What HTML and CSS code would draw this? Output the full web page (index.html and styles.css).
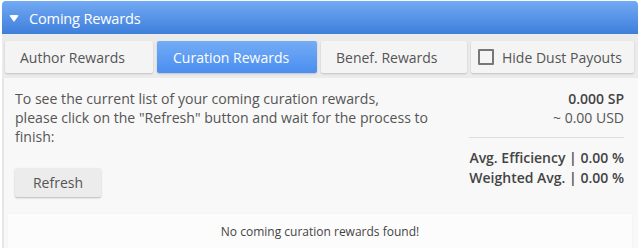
FILE: index.html
```html
<!DOCTYPE html>
<html>
<head>
<meta charset="utf-8">
<link rel="stylesheet" href="styles.css">
</head>
<body>
<div class="panel">
  <div class="panel-header">
    <span class="caret"></span>
    <span class="title">Coming Rewards</span>
  </div>
  <div class="tabs">
    <div class="tab">Author Rewards</div>
    <div class="tab active">Curation Rewards</div>
    <div class="tab">Benef. Rewards</div>
    <div class="tab check"><span class="box"></span>Hide Dust Payouts</div>
  </div>
  <div class="body">
    <div class="info">
      <div class="left">
        <p class="msg">To see the current list of your coming curation rewards,<br>please click on the "Refresh" button and wait for the process to<br>finish:</p>
        <button class="btn">Refresh</button>
      </div>
      <div class="right">
        <div class="sp">0.000 SP</div>
        <div class="usd">~ 0.00 USD</div>
        <div class="sep"></div>
        <div class="stat">Avg. Efficiency | 0.00 %</div>
        <div class="stat">Weighted Avg. | 0.00 %</div>
      </div>
    </div>
    <div class="empty">No coming curation rewards found!</div>
  </div>
</div>
</body>
</html>
```
FILE: styles.css
```css
html, body {
  margin: 0;
  padding: 0;
  background: #ffffff;
  font-family: "Open Sans", "Noto Sans", sans-serif;
  color: #555555;
}
.panel {
  margin: 1px 2px 0 2px;
}
.panel-header {
  height: 33px;
  border-radius: 4px 4px 0 0;
  background: linear-gradient(#72a9f3, #3e7fdb);
  display: flex;
  align-items: center;
  padding-left: 7px;
  color: #ffffff;
  box-shadow: 0 1px 1px rgba(0,0,0,0.15);
}
.caret {
  width: 0;
  height: 0;
  border-left: 5.5px solid transparent;
  border-right: 5.5px solid transparent;
  border-top: 7px solid #ffffff;
  border-radius: 2px;
  margin-right: 10px;
  margin-top: 1px;
}
.title {
  font-size: 14.6px;
  letter-spacing: -0.2px;
}
.tabs {
  background: #ebebeb;
  padding: 7px 4px 5px 3px;
  display: grid;
  grid-template-columns: 148px 160px 146px 1fr;
  gap: 4px;
}
.tab {
  height: 32px;
  background: #f4f4f4;
  border-radius: 2px;
  box-shadow: 0 1px 2px rgba(0,0,0,0.18);
  display: flex;
  align-items: center;
  justify-content: flex-start;
  padding-left: 15px;
  font-size: 14px;
  color: #555555;
}
.tab.active {
  background: linear-gradient(#74acf6, #4a8ef0);
  color: #ffffff;
  padding-left: 16px;
}
.tab.check {
  padding-left: 7px;
}
.box {
  width: 12px;
  height: 12px;
  border: 2px solid #777777;
  border-radius: 1px;
  margin-right: 8px;
}
.body {
  background: #f8f8f8;
  border-left: 2px solid #e6e6e6;
  height: 170px;
}
.info {
  display: flex;
  justify-content: space-between;
  padding: 11px 14px 0 11px;
  height: 125px;
}
.msg {
  margin: 0;
  font-size: 14.1px;
  line-height: 19px;
}
.btn {
  margin-top: 22px;
  width: 86px;
  height: 29px;
  border: none;
  border-radius: 2px;
  background: #ececec;
  box-shadow: 0 1px 2px rgba(0,0,0,0.25);
  font-family: "Open Sans", "Noto Sans", sans-serif;
  font-size: 14px;
  color: #555555;
  padding: 0;
}
.right {
  display: flex;
  flex-direction: column;
  align-items: flex-end;
  font-size: 14px;
  line-height: 19px;
  white-space: nowrap;
  flex-shrink: 0;
}
.sp {
  font-weight: 600;
  color: #444444;
}
.sep {
  align-self: stretch;
  height: 1px;
  background: #dddddd;
  margin: 10px 0 10px 0;
}
.stat {
  font-weight: 600;
  color: #444444;
  line-height: 20px;
}
.empty {
  margin: 0 6px 0 4px;
  background: #fcfcfc;
  height: 34px;
  display: flex;
  align-items: center;
  justify-content: center;
  font-size: 12px;
  color: #444444;
  box-shadow: 0 0 1px rgba(0,0,0,0.08);
}
```
